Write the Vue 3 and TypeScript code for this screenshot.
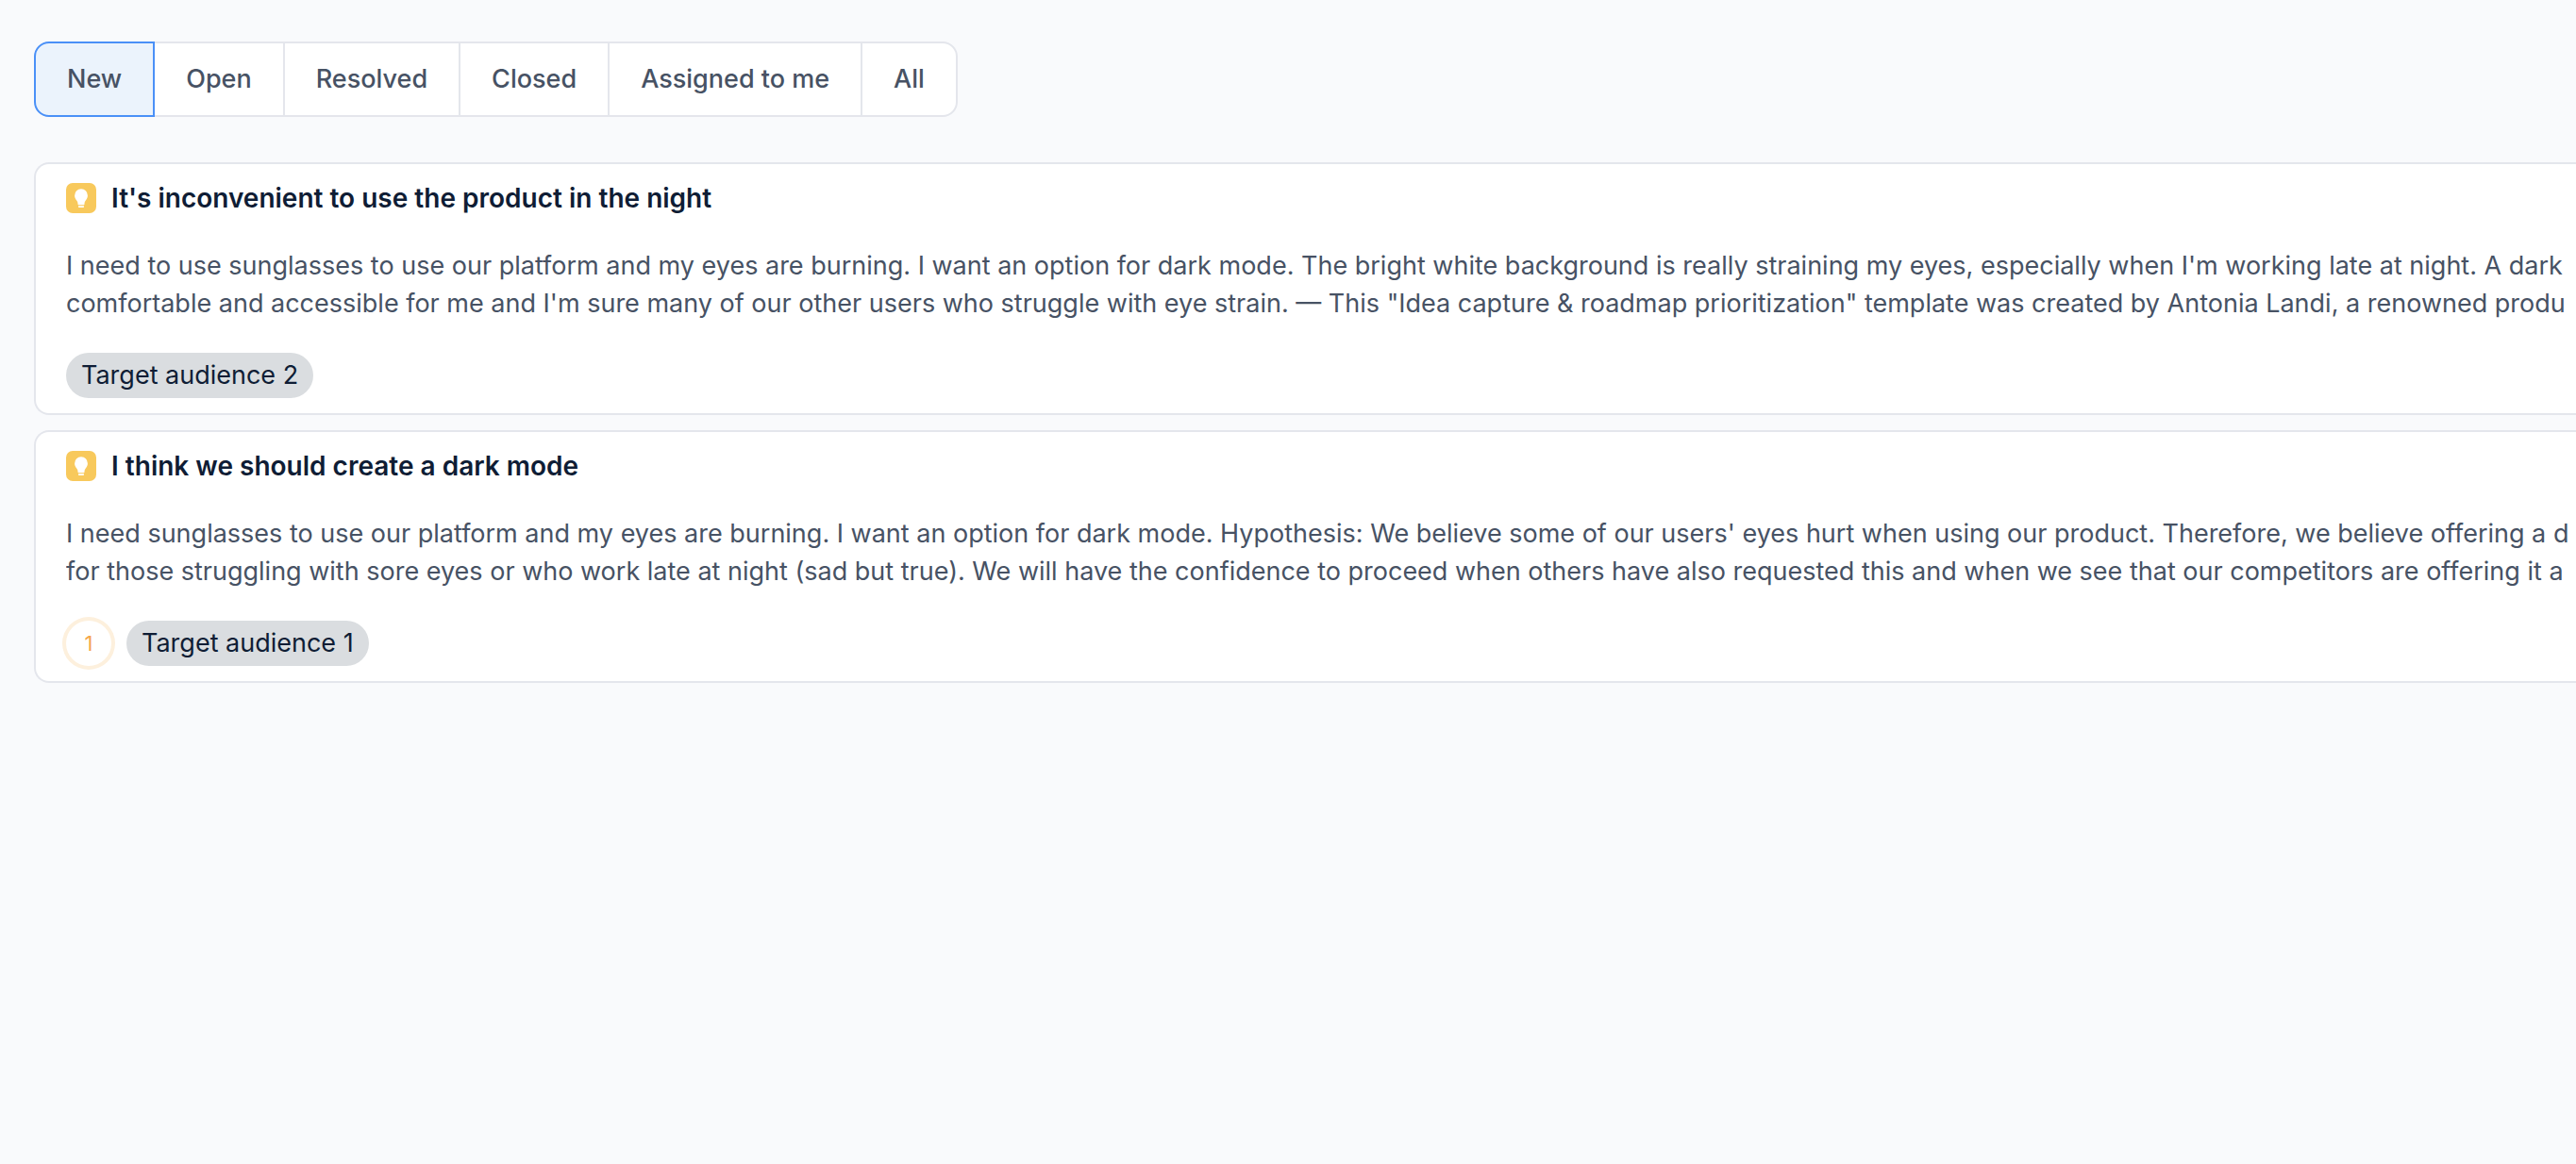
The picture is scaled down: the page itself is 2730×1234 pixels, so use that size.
<script setup lang="ts">
import { ref } from 'vue'

interface Idea {
  title: string
  lines: string[]
  votes?: number
  tag: string
}

const tabs: string[] = ['New', 'Open', 'Resolved', 'Closed', 'Assigned to me', 'All']
const active = ref('New')

const ideas: Idea[] = [
  {
    title: "It's inconvenient to use the product in the night",
    lines: [
      "I need to use sunglasses to use our platform and my eyes are burning. I want an option for dark mode. The bright white background is really straining my eyes, especially when I'm working late at night. A dark",
      'comfortable and accessible for me and I\'m sure many of our other users who struggle with eye strain. — This "Idea capture & roadmap prioritization" template was created by Antonia Landi, a renowned produ',
    ],
    tag: 'Target audience 2',
  },
  {
    title: 'I think we should create a dark mode',
    lines: [
      "I need sunglasses to use our platform and my eyes are burning. I want an option for dark mode. Hypothesis: We believe some of our users' eyes hurt when using our product. Therefore, we believe offering a d",
      'for those struggling with sore eyes or who work late at night (sad but true). We will have the confidence to proceed when others have also requested this and when we see that our competitors are offering it a',
    ],
    votes: 1,
    tag: 'Target audience 1',
  },
]
</script>

<template>
  <main class="page">
    <nav class="tabs" aria-label="Status">
      <button
        v-for="tab in tabs"
        :key="tab"
        type="button"
        class="tab"
        :class="{ active: tab === active }"
        :aria-pressed="tab === active"
        @click="active = tab"
      >{{ tab }}</button>
    </nav>

    <section class="list">
      <article v-for="idea in ideas" :key="idea.title" class="card">
        <header class="head">
          <svg class="icon" viewBox="0 0 32 32" aria-hidden="true">
            <rect width="32" height="32" rx="7" fill="#f8c95c" />
            <path
              d="M16 6.3a6.9 6.9 0 0 0-6.9 6.900c0 2.400 1.100 4 2.100 5.400.8 1.100 1.300 2.100 1.300 3.200v.7c0 .5.3.8.8.8h5.400c.5 0 .8-.3.8-.8v-.7c0-1.100.5-2.100 1.300-3.200 1-1.400 2.100-3 2.100-5.400A6.900 6.900 0 0 0 16 6.300z"
              fill="#fff"
            />
            <path d="M13 24.200h6v.8c0 .6-.4 1-1 1h-4c-.6 0-1-.4-1-1z" fill="#fff" />
          </svg>
          <h2 class="title">{{ idea.title }}</h2>
        </header>
        <p class="body">
          <span v-for="line in idea.lines" :key="line" class="line">{{ line }}</span>
        </p>
        <footer class="meta">
          <span v-if="idea.votes" class="votes">{{ idea.votes }}</span>
          <span class="tag">{{ idea.tag }}</span>
        </footer>
      </article>
    </section>
  </main>
</template>

<style>
body {
  background: #f9fafc;
}
</style>

<style scoped>
.page {
  display: flex;
  flex-direction: column;
  gap: 48px;
  padding: 44px 0 44px 36px;
  font-family: Inter, 'Liberation Sans', sans-serif;
  font-size: 27px;
  line-height: 40px;
  color: #475264;
}

.tabs {
  display: flex;
}

.tab {
  height: 80px;
  margin: 0 0 0 -2px;
  padding: 0 33px;
  border: 2px solid #e4e6ec;
  background: #fff;
  color: inherit;
  font: inherit;
  font-weight: 500;
  cursor: pointer;
}

.tab:first-child {
  margin-left: 0;
  border-radius: 16px 0 0 16px;
}

.tab:last-child {
  border-radius: 0 16px 16px 0;
}

.tab.active {
  z-index: 1;
  border-color: #4a90f7;
  background: #ebf3fc;
}

.list {
  display: flex;
  flex-direction: column;
  gap: 16px;
}

.card {
  display: flex;
  flex-direction: column;
  padding: 16px 0 16px 32px;
  border: 2px solid #e4e6ec;
  border-right: 0;
  border-radius: 16px 0 0 16px;
  background: #fff;
}

.head {
  display: flex;
  align-items: center;
  gap: 16px;
  height: 40px;
}

.icon {
  width: 32px;
  height: 32px;
}

.title {
  margin: 0;
  color: #0f1d35;
  font-size: 28px;
  font-weight: 600;
}

.body {
  margin: 32px 0;
  overflow: hidden;
}

.line {
  display: block;
  white-space: nowrap;
}

.meta {
  display: flex;
  gap: 16px;
}

.votes {
  display: flex;
  align-items: center;
  justify-content: center;
  width: 48px;
  height: 48px;
  border-radius: 50%;
  box-shadow: 0 0 0 4px #fdf0dd;
  color: #f5a64b;
  font-size: 22px;
}

.tag {
  padding: 4px 16px;
  border-radius: 24px;
  background: #dadde0;
  color: #0f1d35;
}
</style>
